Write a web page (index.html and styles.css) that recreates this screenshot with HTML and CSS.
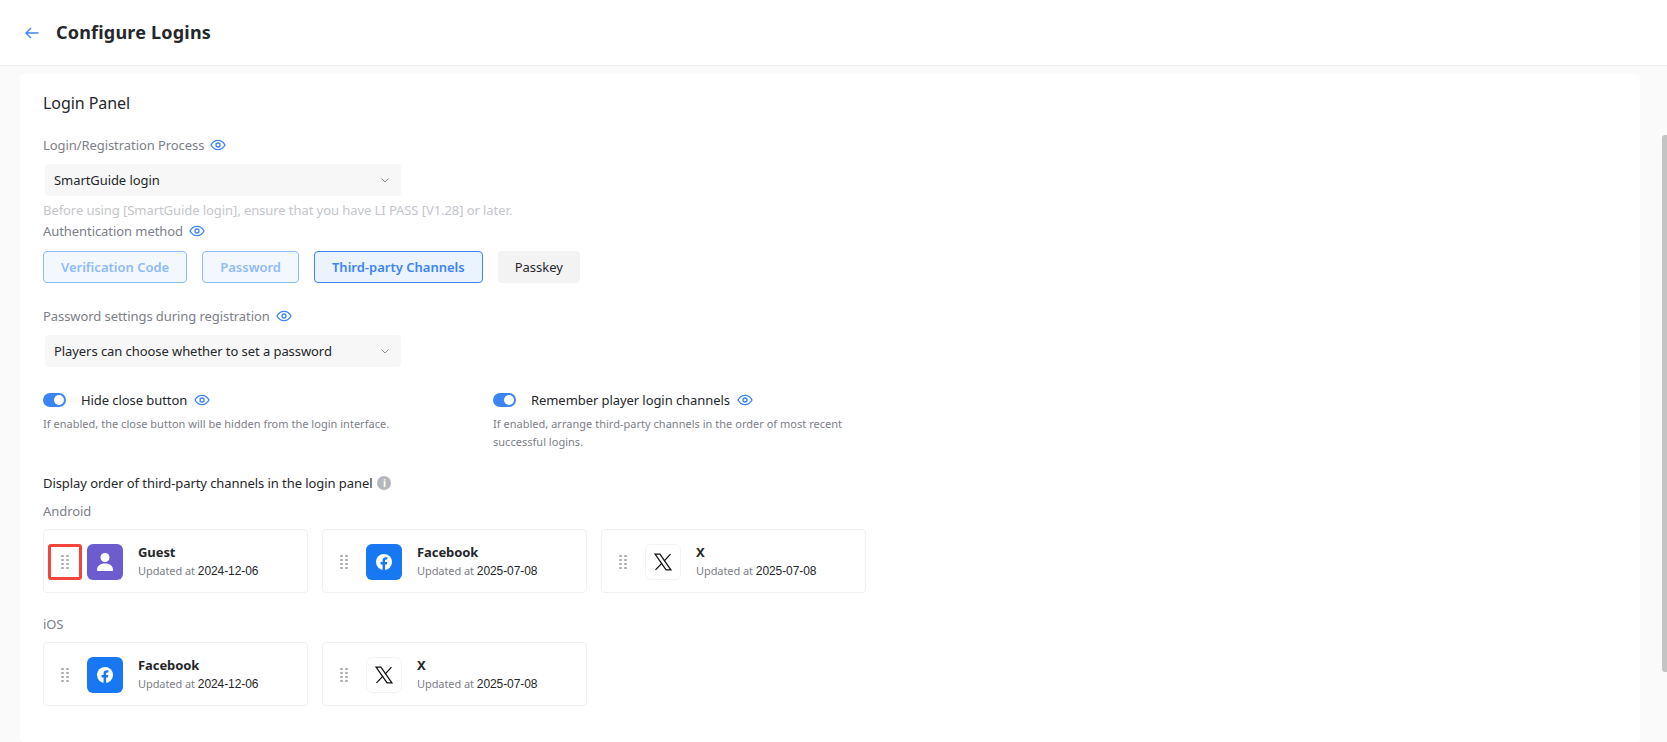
FILE: index.html
```html
<!DOCTYPE html>
<html lang="en">
<head>
    <meta charset="UTF-8">
    <meta name="viewport" content="width=device-width, initial-scale=1.0">
    <title>Configure Logins</title>
    <link rel="stylesheet" href="styles.css">
</head>
<body>
    <svg class="defs" width="0" height="0">
        <symbol id="eye" viewBox="0 0 16 16">
            <path d="M1 8c1.600-3 4-4.600 7-4.600S13.400 5 15 8c-1.600 3-4 4.600-7 4.600S2.600 11 1 8z" fill="none" stroke="currentColor" stroke-width="1.300"/>
            <circle cx="8" cy="8" r="2" fill="none" stroke="currentColor" stroke-width="1.300"/>
        </symbol>
        <symbol id="chevron" viewBox="0 0 10 10">
            <path d="M1.500 3.500L5 7l3.500-3.500" fill="none" stroke="currentColor" stroke-width="1"/>
        </symbol>
        <symbol id="drag" viewBox="0 0 8 14">
            <g fill="currentColor">
                <rect x="0" y="0" width="3" height="2" rx="1"/><rect x="5" y="0" width="3" height="2" rx="1"/>
                <rect x="0" y="4" width="3" height="2" rx="1"/><rect x="5" y="4" width="3" height="2" rx="1"/>
                <rect x="0" y="8" width="3" height="2" rx="1"/><rect x="5" y="8" width="3" height="2" rx="1"/>
                <rect x="0" y="12" width="3" height="2" rx="1"/><rect x="5" y="12" width="3" height="2" rx="1"/>
            </g>
        </symbol>
        <symbol id="guest" viewBox="0 0 36 36">
            <circle cx="18" cy="13.500" r="4.500" fill="#fff"/>
            <path d="M10 26c0-4 3-6.500 8-6.500s8 2.500 8 6.500c0 .6-.4 1-1 1H11c-.6 0-1-.4-1-1z" fill="#fff"/>
        </symbol>
        <symbol id="facebook" viewBox="0 0 36 36">
            <circle cx="18" cy="18" r="8" fill="#fff"/>
            <path d="M16.600 26v-5.500h-2v-2.400h2v-1.600c0-2.100 1.200-3.200 3.100-3.200.9 0 1.700.1 1.700.1v2h-1c-1 0-1.300.6-1.300 1.200v1.500h2.200l-.4 2.400h-1.800V26z" fill="#1877f2"/>
        </symbol>
        <symbol id="x-logo" viewBox="0 0 24 24">
            <path d="M2.500 2.500h5.800l13.200 19h-5.800z" fill="none" stroke="#111" stroke-width="1.500"/>
            <path d="M21 2.500l-7.700 8.400M10.700 13.400L3 21.500" fill="none" stroke="#111" stroke-width="1.500"/>
        </symbol>
    </svg>

    <header class="top-bar">
        <svg class="back-icon" width="16" height="16" viewBox="0 0 16 16">
            <path d="M14.500 8H2M7 3L2 8l5 5" fill="none" stroke="currentColor" stroke-width="1.400"/>
        </svg>
        <h1>Configure Logins</h1>
    </header>

    <main class="panel">
        <h2>Login Panel</h2>

        <div class="label label-first">Login/Registration Process <svg class="eye"><use href="#eye"/></svg></div>
        <div class="select">
            <span>SmartGuide login</span>
            <svg class="chevron"><use href="#chevron"/></svg>
        </div>
        <div class="hint">Before using [SmartGuide login], ensure that you have LI PASS [V1.28] or later.</div>

        <div class="label">Authentication method <svg class="eye"><use href="#eye"/></svg></div>
        <div class="method-row">
            <div class="method method-locked">Verification Code</div>
            <div class="method method-locked">Password</div>
            <div class="method method-active">Third-party Channels</div>
            <div class="method method-plain">Passkey</div>
        </div>

        <div class="label label-spaced">Password settings during registration <svg class="eye"><use href="#eye"/></svg></div>
        <div class="select">
            <span>Players can choose whether to set a password</span>
            <svg class="chevron"><use href="#chevron"/></svg>
        </div>

        <div class="switch-row">
            <div class="switch-item">
                <div class="switch-head">
                    <span class="switch"></span>
                    <span>Hide close button</span>
                    <svg class="eye"><use href="#eye"/></svg>
                </div>
                <p>If enabled, the close button will be hidden from the login interface.</p>
            </div>
            <div class="switch-item">
                <div class="switch-head">
                    <span class="switch"></span>
                    <span>Remember player login channels</span>
                    <svg class="eye"><use href="#eye"/></svg>
                </div>
                <p>If enabled, arrange third-party channels in the order of most recent successful logins.</p>
            </div>
        </div>

        <div class="order-title">
            Display order of third-party channels in the login panel
            <span class="info">i</span>
        </div>

        <div class="platform">Android</div>
        <div class="channel-row">
            <div class="channel">
                <div class="handle handle-marked"><svg class="drag"><use href="#drag"/></svg></div>
                <svg class="logo logo-guest"><use href="#guest"/></svg>
                <div class="channel-text">
                    <strong>Guest</strong>
                    <div class="updated">Updated at <span>2024-12-06</span></div>
                </div>
            </div>
            <div class="channel">
                <div class="handle"><svg class="drag"><use href="#drag"/></svg></div>
                <svg class="logo logo-facebook"><use href="#facebook"/></svg>
                <div class="channel-text">
                    <strong>Facebook</strong>
                    <div class="updated">Updated at <span>2025-07-08</span></div>
                </div>
            </div>
            <div class="channel">
                <div class="handle"><svg class="drag"><use href="#drag"/></svg></div>
                <div class="logo logo-x"><svg><use href="#x-logo"/></svg></div>
                <div class="channel-text">
                    <strong>X</strong>
                    <div class="updated">Updated at <span>2025-07-08</span></div>
                </div>
            </div>
        </div>

        <div class="platform platform-ios">iOS</div>
        <div class="channel-row">
            <div class="channel">
                <div class="handle"><svg class="drag"><use href="#drag"/></svg></div>
                <svg class="logo logo-facebook"><use href="#facebook"/></svg>
                <div class="channel-text">
                    <strong>Facebook</strong>
                    <div class="updated">Updated at <span>2024-12-06</span></div>
                </div>
            </div>
            <div class="channel">
                <div class="handle"><svg class="drag"><use href="#drag"/></svg></div>
                <div class="logo logo-x"><svg><use href="#x-logo"/></svg></div>
                <div class="channel-text">
                    <strong>X</strong>
                    <div class="updated">Updated at <span>2025-07-08</span></div>
                </div>
            </div>
        </div>
    </main>

    <div class="scroll-thumb"></div>
</body>
</html>
```

FILE: styles.css
```css
/* Page */
html, body {
    height: 100%;
}

body {
    margin: 0;
    overflow: hidden;
    font-family: 'Noto Sans', sans-serif;
    font-size: 13px;
    letter-spacing: -0.07px;
    background-color: #fafafa;
    color: #1f2329;
}

.defs {
    position: absolute;
}

/* Top bar */
.top-bar {
    display: flex;
    align-items: center;
    height: 65px;
    padding-left: 24px;
    background-color: #fff;
    border-bottom: 1px solid #eeeeee;
    box-sizing: content-box;
}

.back-icon {
    color: #3d85f5;
    margin-right: 16px;
}

h1 {
    margin: 0 0 2px;
    font-size: 18px;
    font-weight: 700;
    letter-spacing: 0.2px;
    color: #25272b;
}

/* Panel */
.panel {
    margin: 8px 27px 0 20px;
    padding: 17px 23px 0;
    height: 668px;
    box-sizing: border-box;
    background-color: #fff;
    border-radius: 4px;
}

h2 {
    margin: 0;
    font-size: 16px;
    line-height: 24px;
    font-weight: 400;
    color: #25272b;
}

.label {
    display: flex;
    align-items: center;
    gap: 6px;
    height: 20px;
    color: #7d8088;
}

.label-first {
    margin-top: 20px;
}

.label-spaced {
    margin-top: 23px;
}

.eye {
    width: 16px;
    height: 16px;
    color: #3d85f5;
}

.select {
    display: flex;
    align-items: center;
    justify-content: space-between;
    width: 356px;
    height: 32px;
    margin: 9px 0 0 2px;
    padding: 0 11px 0 9px;
    box-sizing: border-box;
    background-color: #f7f7f7;
    border-radius: 4px;
    color: #25272b;
}

.chevron {
    width: 10px;
    height: 10px;
    color: #8b8e95;
}

.hint {
    margin-top: 4px;
    height: 21px;
    line-height: 20px;
    color: #c4c6cb;
}

/* Auth method buttons */
.method-row {
    display: flex;
    gap: 15px;
    margin-top: 10px;
}

.method {
    display: flex;
    align-items: center;
    height: 32px;
    padding: 0 17px;
    box-sizing: border-box;
    border-radius: 4px;
    font-weight: 600;
    letter-spacing: 0;
}

.method-locked {
    border: 1px solid #8fbbfa;
    background-color: #f3f8ff;
    color: #8fbbfa;
}

.method-active {
    border: 1px solid #3d85f5;
    background-color: #ebf3fe;
    color: #3d85f5;
}

.method-plain {
    background-color: #f3f3f3;
    font-weight: 400;
    color: #25272b;
}

/* Switches */
.switch-row {
    display: flex;
    margin-top: 23px;
}

.switch-item {
    width: 450px;
}

.switch-head {
    display: flex;
    align-items: center;
    height: 20px;
    color: #25272b;
}

.switch-head .eye {
    margin-left: 7px;
}

.switch {
    position: relative;
    width: 23px;
    height: 14px;
    margin-right: 15px;
    border-radius: 7px;
    background-color: #3d85f5;
}

.switch::after {
    content: "";
    position: absolute;
    top: 2px;
    right: 2px;
    width: 10px;
    height: 10px;
    border-radius: 50%;
    background-color: #fff;
}

.switch-item p {
    width: 360px;
    margin: 5px 0 0;
    font-size: 11px;
    line-height: 18px;
    letter-spacing: 0.02px;
    color: #7d8088;
}

/* Channels */
.order-title {
    display: flex;
    align-items: center;
    gap: 5px;
    height: 20px;
    margin-top: 22px;
    color: #25272b;
}

.info {
    display: flex;
    align-items: center;
    justify-content: center;
    width: 14px;
    height: 14px;
    border-radius: 50%;
    background-color: #b5b7bd;
    color: #fff;
    font-size: 10px;
    font-weight: 700;
}

.platform {
    height: 20px;
    line-height: 20px;
    margin-top: 8px;
    color: #7d8088;
}

.platform-ios {
    margin-top: 21px;
}

.channel-row {
    display: flex;
    gap: 14px;
    margin-top: 8px;
}

.channel {
    display: flex;
    align-items: center;
    width: 265px;
    height: 64px;
    padding-left: 4px;
    box-sizing: border-box;
    background-color: #fff;
    border: 1px solid #f0f0f0;
    border-radius: 4px;
}

.handle {
    display: flex;
    align-items: center;
    justify-content: center;
    width: 34px;
    height: 36px;
    box-sizing: border-box;
    margin: 2px 5px 0 0;
    border: 3px solid transparent;
    border-radius: 3px;
}

.handle-marked {
    border-color: #f2453d;
}

.drag {
    width: 8px;
    height: 14px;
    color: #a9abb3;
}

.logo {
    flex: none;
    width: 36px;
    height: 36px;
    margin-top: 2px;
    border-radius: 6px;
}

.logo-guest {
    background-color: #6d5bd0;
}

.logo-facebook {
    background-color: #1877f2;
}

.logo-x {
    display: flex;
    align-items: center;
    justify-content: center;
    box-sizing: border-box;
    border: 1px solid #f3f3f3;
}

.logo-x svg {
    width: 20px;
    height: 20px;
}

.channel-text {
    margin-left: 15px;
}

.channel-text strong {
    display: block;
    line-height: 18px;
    font-weight: 700;
    color: #25272b;
}

.updated {
    margin-top: 2px;
    font-size: 11px;
    line-height: 16px;
    color: #7d8088;
}

.updated span {
    font-family: 'Liberation Sans', sans-serif;
    font-size: 12px;
    color: #25272b;
}

/* Scrollbar thumb sits over the page edge */
.scroll-thumb {
    position: absolute;
    top: 135px;
    right: 0;
    width: 5px;
    height: 537px;
    border-radius: 3px 0 0 3px;
    background-color: #c4c4c4;
}
```
